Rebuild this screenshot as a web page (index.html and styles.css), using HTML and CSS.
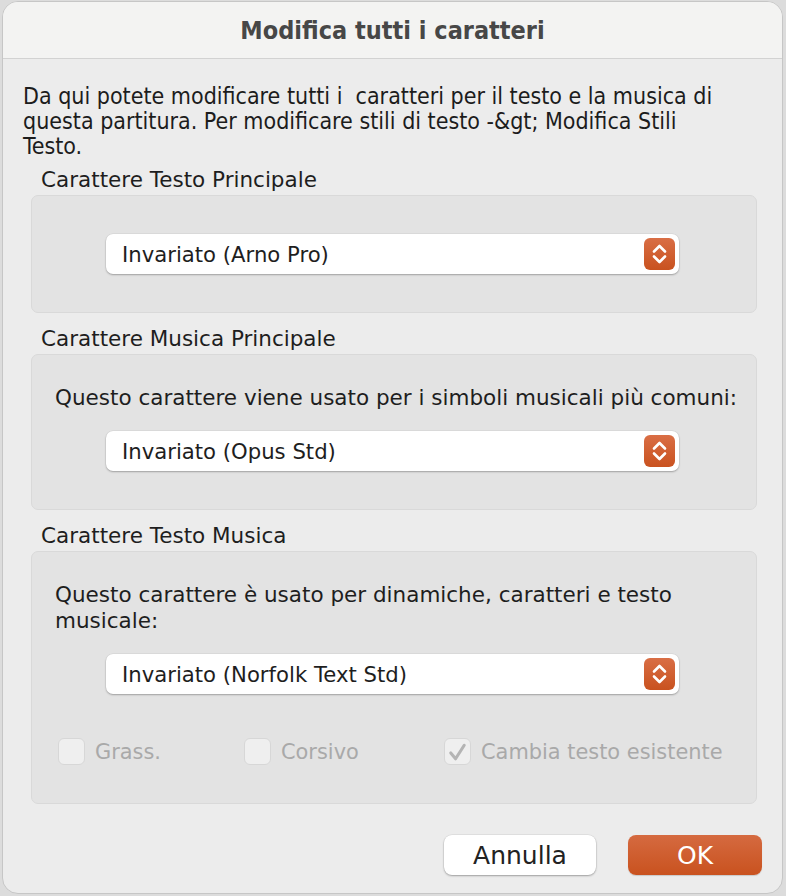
FILE: index.html
```html
<!DOCTYPE html>
<html lang="it">
<head>
<meta charset="utf-8">
<title>Modifica tutti i caratteri</title>
<link rel="stylesheet" href="styles.css">
</head>
<body>
<div class="window">
  <div class="titlebar"><span class="title">Modifica tutti i caratteri</span></div>
  <div class="content">
    <p class="intro">Da qui potete modificare tutti i&nbsp; caratteri per il testo e la musica di questa partitura. Per modificare stili di testo -&amp;gt; Modifica Stili Testo.</p>

    <div class="label label-first">Carattere Testo Principale</div>
    <div class="group group-1">
      <div class="popup"><span class="popup-text">Invariato (Arno Pro)</span><span class="stepper"><svg viewBox="0 0 31 32" width="31" height="32"><path d="M10 13.5 L15.5 8 L21 13.5 M10 18.5 L15.5 24 L21 18.5" fill="none" stroke="#fff" stroke-width="2.6" stroke-linecap="round" stroke-linejoin="round"/></svg></span></div>
    </div>

    <div class="label">Carattere Musica Principale</div>
    <div class="group group-2">
      <p class="group-text">Questo carattere viene usato per i simboli musicali più comuni:</p>
      <div class="popup"><span class="popup-text">Invariato (Opus Std)</span><span class="stepper"><svg viewBox="0 0 31 32" width="31" height="32"><path d="M10 13.5 L15.5 8 L21 13.5 M10 18.5 L15.5 24 L21 18.5" fill="none" stroke="#fff" stroke-width="2.6" stroke-linecap="round" stroke-linejoin="round"/></svg></span></div>
    </div>

    <div class="label">Carattere Testo Musica</div>
    <div class="group group-3">
      <p class="group-text">Questo carattere è usato per dinamiche, caratteri e testo musicale:</p>
      <div class="popup"><span class="popup-text">Invariato (Norfolk Text Std)</span><span class="stepper"><svg viewBox="0 0 31 32" width="31" height="32"><path d="M10 13.5 L15.5 8 L21 13.5 M10 18.5 L15.5 24 L21 18.5" fill="none" stroke="#fff" stroke-width="2.6" stroke-linecap="round" stroke-linejoin="round"/></svg></span></div>
      <div class="checks">
        <label class="check check-bold"><span class="box"></span><span class="check-label">Grass.</span></label>
        <label class="check check-italic"><span class="box"></span><span class="check-label">Corsivo</span></label>
        <label class="check check-existing"><span class="box"><svg viewBox="0 0 26 27" width="26" height="27"><path d="M6 14 L11 20 L20 6" fill="none" stroke="#b4b4b4" stroke-width="3.2" stroke-linecap="round" stroke-linejoin="round"/></svg></span><span class="check-label">Cambia testo esistente</span></label>
      </div>
    </div>

    <div class="buttons">
      <button class="btn btn-cancel">Annulla</button>
      <button class="btn btn-ok">OK</button>
    </div>
  </div>
</div>
</body>
</html>
```

FILE: styles.css
```css
html, body {
  margin: 0;
  padding: 0;
}
body {
  background: #dcdcdc;
  width: 786px;
  height: 896px;
  overflow: hidden;
}
.window {
  box-sizing: border-box;
  margin: 1px 3px 0 2px;
  height: 893px;
  border: 1px solid #c6c6c6;
  border-radius: 16px;
  background: #ececec;
  overflow: hidden;
  display: flex;
  flex-direction: column;
}
.titlebar {
  height: 56px;
  flex: none;
  background: #f3f3f2;
  border-bottom: 1px solid #d2d2d2;
  display: flex;
  align-items: center;
  justify-content: center;
}
.title {
  font-family: "DejaVu Sans Condensed", "Liberation Sans", sans-serif;
  font-weight: bold;
  font-size: 25px;
  color: #474747;
}
.content {
  padding: 25px 25px 0 28px;
  display: flex;
  flex-direction: column;
}
.intro {
  margin: 0 0 0 -8px;
  max-width: 708px;
  font-family: "DejaVu Sans Condensed", "Liberation Sans", sans-serif;
  font-size: 23px;
  line-height: 25px;
  color: #1c1c1c;
}
.label {
  margin: 13px 0 0 10px;
  font-family: "DejaVu Sans", sans-serif;
  font-size: 21.5px;
  line-height: 26px;
  color: #1e1e1e;
}
.label-first {
  margin-top: 8px;
}
.group {
  box-sizing: border-box;
  margin-top: 2px;
  background: #e3e3e3;
  border: 1px solid #d9d9d9;
  border-radius: 7px;
  display: flex;
  flex-direction: column;
  align-items: center;
}
.group-1 {
  height: 118px;
  justify-content: center;
}
.group-2 {
  height: 156px;
  padding-top: 30px;
}
.group-3 {
  height: 253px;
  padding-top: 30px;
}
.group-text {
  align-self: stretch;
  margin: 0 0 20px 23px;
  font-family: "DejaVu Sans", sans-serif;
  font-size: 21.5px;
  line-height: 26px;
  color: #1e1e1e;
}
.popup {
  box-sizing: border-box;
  width: 573px;
  height: 40px;
  margin-left: -3px;
  background: #fff;
  border-radius: 7px;
  box-shadow: 0 1px 2px rgba(0,0,0,0.28), 0 0 0 0.5px rgba(0,0,0,0.06);
  display: flex;
  align-items: center;
  justify-content: space-between;
  padding: 0 4px 0 16px;
}
.popup-text {
  font-family: "DejaVu Sans", sans-serif;
  font-size: 21.2px;
  color: #1e1e1e;
}
.stepper {
  width: 31px;
  height: 32px;
  border-radius: 6px;
  background: linear-gradient(#d96e45, #c9521f);
  display: flex;
}
.checks {
  align-self: stretch;
  display: flex;
  margin-top: 44px;
  padding-left: 26px;
}
.check {
  display: flex;
  align-items: center;
  gap: 10px;
}
.check-bold { width: 186px; }
.check-italic { width: 200px; }
.box {
  box-sizing: border-box;
  width: 27px;
  height: 27px;
  border: 1px solid #d7d7d7;
  border-radius: 6px;
  background: #efefef;
  display: flex;
}
.check-label {
  font-family: "DejaVu Sans", sans-serif;
  font-size: 20.9px;
  color: #a9a9a9;
}
.buttons {
  display: flex;
  justify-content: flex-end;
  gap: 32px;
  margin: 31px -5px 0 0;
}
.btn {
  height: 40px;
  border: none;
  border-radius: 8px;
  font-family: "DejaVu Sans", sans-serif;
  font-size: 25px;
  padding: 0;
}
.btn-cancel {
  width: 152px;
  background: #fff;
  color: #222;
  box-shadow: 0 1px 2px rgba(0,0,0,0.3), 0 0 0 0.5px rgba(0,0,0,0.08);
}
.btn-ok {
  width: 134px;
  background: linear-gradient(#d56a40, #c9521f);
  color: #fff;
  box-shadow: 0 1px 1px rgba(0,0,0,0.15);
}
```
